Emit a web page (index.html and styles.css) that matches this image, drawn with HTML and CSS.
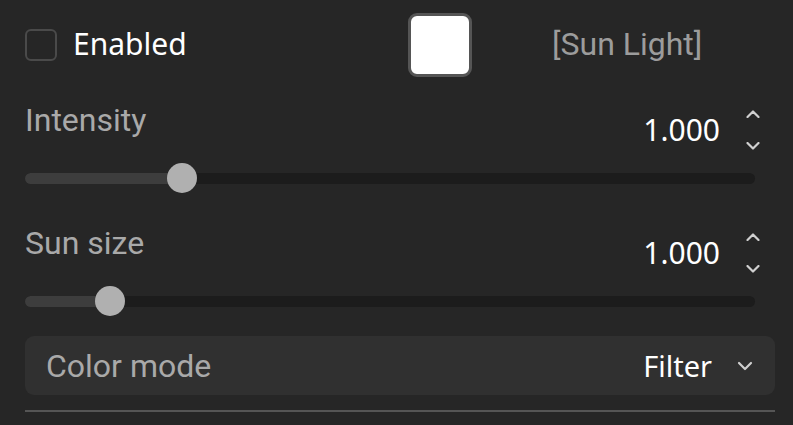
FILE: index.html
```html
<!DOCTYPE html>
<html>
<head>
<meta charset="utf-8">
<link rel="stylesheet" href="styles.css">
</head>
<body>
<div class="panel">
  <div class="top-row">
    <div class="enable">
      <span class="checkbox"></span>
      <span class="enable-label">Enabled</span>
    </div>
    <span class="swatch"></span>
    <span class="light-name">[Sun Light]</span>
  </div>

  <div class="param">
    <div class="param-head">
      <span class="param-label">Intensity</span>
      <div class="param-value">
        <span class="value">1.000</span>
        <span class="stepper">
          <svg class="chev" viewBox="0 0 14 8" width="14" height="8"><path d="M1.5 7 L7 1.5 L12.5 7" /></svg>
          <svg class="chev" viewBox="0 0 14 8" width="14" height="8"><path d="M1.5 1 L7 6.5 L12.5 1" /></svg>
        </span>
      </div>
    </div>
    <div class="slider">
      <div class="track"><div class="fill" style="width:21.5%"></div></div>
      <span class="thumb" style="left:21.5%"></span>
    </div>
  </div>

  <div class="param param-second">
    <div class="param-head">
      <span class="param-label">Sun size</span>
      <div class="param-value">
        <span class="value">1.000</span>
        <span class="stepper">
          <svg class="chev" viewBox="0 0 14 8" width="14" height="8"><path d="M1.5 7 L7 1.5 L12.5 7" /></svg>
          <svg class="chev" viewBox="0 0 14 8" width="14" height="8"><path d="M1.5 1 L7 6.5 L12.5 1" /></svg>
        </span>
      </div>
    </div>
    <div class="slider">
      <div class="track"><div class="fill" style="width:11.6%"></div></div>
      <span class="thumb" style="left:11.6%"></span>
    </div>
  </div>

  <div class="dropdown">
    <span class="dropdown-label">Color mode</span>
    <div class="dropdown-value">
      <span class="dropdown-text">Filter</span>
      <svg class="chev chev-drop" viewBox="0 0 16 10" width="16" height="10"><path d="M2 2 L8 8 L14 2" /></svg>
    </div>
  </div>

  <div class="divider"></div>
</div>
</body>
</html>
```

FILE: styles.css
```css
html, body {
  margin: 0;
  padding: 0;
  background: #262626;
  width: 793px;
  height: 425px;
  overflow: hidden;
}

.panel {
  padding: 0 18px 0 25px;
  display: flex;
  flex-direction: column;
}

.top-row {
  height: 90px;
  display: flex;
  align-items: center;
}

.enable {
  width: 383px;
  display: flex;
  align-items: center;
  gap: 16px;
}

.checkbox {
  width: 28px;
  height: 28px;
  border: 2px solid #4a4a4a;
  border-radius: 6px;
  box-sizing: content-box;
}

.enable-label {
  font-family: "Noto Sans", sans-serif;
  font-size: 30px;
  color: #ffffff;
  line-height: 40px;
  margin-top: -2px;
}

.swatch {
  width: 58px;
  height: 58px;
  background: #ffffff;
  border: 3px solid #555555;
  border-radius: 9px;
}

.light-name {
  margin-left: 80px;
  font-family: Roboto, sans-serif;
  font-size: 32px;
  color: #9c9c9c;
  line-height: 40px;
  margin-top: -2px;
}

.param {
  margin-top: 10px;
  padding-right: 15px;
  display: flex;
  flex-direction: column;
}

.param-second {
  margin-top: 30px;
}

.param-head {
  height: 48px;
  display: flex;
  justify-content: space-between;
  align-items: flex-start;
}

.param-label {
  font-family: Roboto, sans-serif;
  font-size: 32px;
  color: #a9a9a9;
  line-height: 40px;
}

.param-value {
  margin-top: 10px;
  display: flex;
  align-items: center;
  gap: 26px;
}

.value {
  font-family: "Noto Sans", sans-serif;
  font-size: 30px;
  color: #ffffff;
  line-height: 40px;
}

.stepper {
  height: 40px;
  display: flex;
  flex-direction: column;
  justify-content: space-between;
}

.chev {
  display: block;
  fill: none;
  stroke: #d0d0d0;
  stroke-width: 2.2;
  stroke-linecap: round;
  stroke-linejoin: round;
}

.slider {
  position: relative;
  margin-top: 15px;
  margin-right: 5px;
  height: 30px;
  display: flex;
  align-items: center;
}

.track {
  width: 100%;
  height: 11px;
  border-radius: 6px;
  background: #1c1c1c;
  overflow: hidden;
}

.fill {
  height: 100%;
  background: #3d3d3d;
}

.thumb {
  position: absolute;
  top: 0;
  width: 30px;
  height: 30px;
  margin-left: -15px;
  border-radius: 50%;
  background: #b0b0b0;
}

.dropdown {
  margin-top: 20px;
  height: 59px;
  border-radius: 9px;
  background: #303030;
  padding: 0 22px 0 21px;
  display: flex;
  align-items: center;
  justify-content: space-between;
}

.dropdown-label {
  font-family: Roboto, sans-serif;
  font-size: 32px;
  color: #a9a9a9;
}

.dropdown-value {
  display: flex;
  align-items: center;
  gap: 25px;
}

.dropdown-text {
  font-family: "Noto Sans", sans-serif;
  font-size: 29px;
  color: #ffffff;
}

.chev-drop {
  stroke: #cfcfcf;
}

.divider {
  margin-top: 15px;
  height: 2px;
  background: #555555;
}
```
